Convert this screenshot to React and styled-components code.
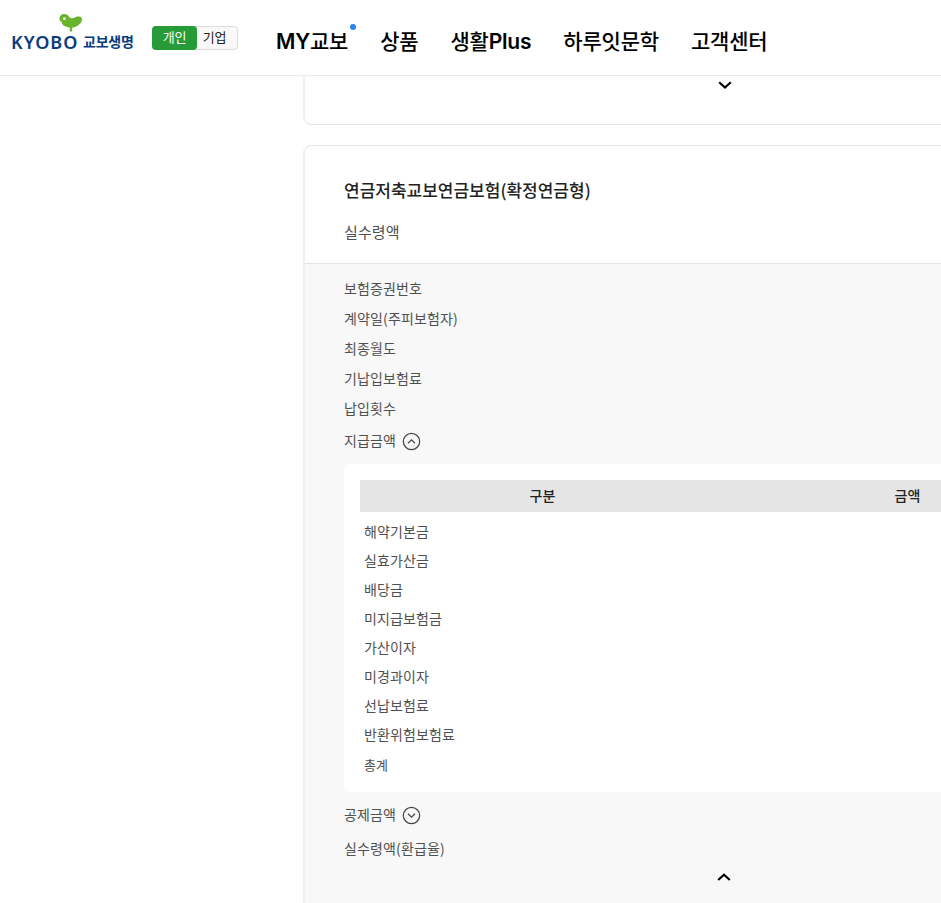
import React from "react";
import styled, { createGlobalStyle } from "styled-components";

const GlobalStyle = createGlobalStyle`
  * {
    box-sizing: border-box;
  }
  html, body {
    margin: 0;
    overflow: hidden;
    background: #fff;
  }
  body {
    font-family: "Noto Sans CJK KR", sans-serif;
    color: #505050;
  }
`;

const PageWrapper = styled.div`
  width: 100%;
  height: 100vh;
  display: flex;
  flex-direction: column;
  overflow: hidden;
`;

const Header = styled.header`
  flex: none;
  height: 76px;
  display: flex;
  align-items: flex-start;
  border-bottom: 1px solid #ebebeb;
  background: #fff;
`;

const Logo = styled.a`
  width: 124px;
  margin: 13px 0 0 11px;
  display: flex;
  flex-direction: column;
  color: #0b3c7f;
`;

const BirdIcon = styled.svg`
  display: block;
  width: 24px;
  height: 19px;
  margin-left: 48px;
`;

const LogoText = styled.span`
  display: flex;
  align-items: center;
  height: 20px;
  white-space: nowrap;
`;

const LogoLatin = styled.span`
  width: 72px;
  font: 600 18px/20px "Noto Sans", sans-serif;
  letter-spacing: 1px;
`;

const LogoKorean = styled.span`
  font-size: 14px;
  font-weight: 700;
  line-height: 20px;
  letter-spacing: -0.2px;
  margin-top: -2px;
`;

const Switch = styled.div`
  width: 86px;
  height: 24px;
  margin: 26px 0 0 17px;
  display: flex;
  border: 1px solid #dcdcdc;
  border-radius: 4px;
  background: #f8f8f8;
`;

const SwitchItem = styled.span`
  width: ${(props) => (props.$active ? 45 : 41)}px;
  height: 24px;
  margin: ${(props) => (props.$active ? "-1px 0 0 -1px" : "-1px 0 0 -3px")};
  border-radius: 4px;
  text-align: center;
  font-size: 13px;
  line-height: 21px;
  letter-spacing: -0.3px;
  color: ${(props) => (props.$active ? "#fff" : "#222")};
  background: ${(props) => (props.$active ? "#279b37" : "transparent")};
`;

const Nav = styled.nav`
  display: flex;
  gap: 32px;
  margin: 25px 0 0 38px;
`;

const NavItem = styled.a`
  position: relative;
  font-family: "Inter", "Noto Sans CJK KR", sans-serif;
  font-size: 21px;
  font-weight: 500;
  line-height: 34px;
  letter-spacing: -0.2px;
  white-space: nowrap;
  color: #000;
`;

const Latin = styled.span`
  font-weight: 600;
`;

const Dot = styled.i`
  position: absolute;
  top: -1px;
  right: -8px;
  width: 6px;
  height: 6px;
  border-radius: 50%;
  background: #2b83f6;
`;

const Content = styled.main`
  width: 842px;
  margin-left: 303px;
`;

const Card = styled.section`
  border: 1px solid #e5e5e5;
  border-left: 2px solid #f0f0f0;
  border-radius: 8px;
  background: #fff;
  overflow: hidden;
`;

const PreviousCard = styled(Card)`
  height: 49px;
  margin-bottom: 20px;
  border-top: none;
  border-top-left-radius: 0;
  border-top-right-radius: 0;
`;

const ToggleArrow = styled.svg`
  display: block;
  width: 14px;
  height: 10px;
  margin: ${(props) => props.$margin};
`;

const CardHead = styled.div`
  height: 118px;
  padding: 28px 39px 0;
  border-bottom: 1px solid #e5e5e5;
`;

const Title = styled.h3`
  margin: 0;
  font-size: 17px;
  font-weight: 500;
  line-height: 32px;
  color: #222;
`;

const AmountLabel = styled.p`
  margin: 14px 0 0;
  font-size: 15px;
  line-height: 24px;
  letter-spacing: 0.1px;
`;

const Detail = styled.div`
  height: 680px;
  padding: 9px 39px 0;
  background: #f8f8f8;
`;

const Row = styled.div`
  display: flex;
  align-items: center;
  height: ${(props) => props.$height || 30}px;
  font-size: 14px;
  letter-spacing: 0.14px;
`;

const CircleIcon = styled.svg`
  width: 19px;
  height: 19px;
  margin: 3px 0 0 6px;
`;

const TableBox = styled.div`
  width: 762px;
  height: 328px;
  margin-top: ${(props) => props.$gap || 0}px;
  padding: 16px;
  border-radius: 5px;
  background: #fff;
`;

const TableHead = styled.div`
  display: grid;
  grid-template-columns: 1fr 1fr;
  height: 32px;
  margin-bottom: 5px;
  text-align: center;
  font-size: 14px;
  font-weight: 500;
  line-height: 30px;
  color: #222;
  background: #e5e5e5;
`;

const TableRow = styled.div`
  padding-left: 4px;
  font-size: 14px;
  line-height: 29px;
  letter-spacing: 0.14px;
`;

const TotalRow = styled(TableRow)`
  font-size: 13px;
  line-height: 31px;
`;

const contractRows = [
  "보험증권번호",
  "계약일(주피보험자)",
  "최종월도",
  "기납입보험료",
  "납입횟수",
];

const paymentRows = [
  "해약기본금",
  "실효가산금",
  "배당금",
  "미지급보험금",
  "가산이자",
  "미경과이자",
  "선납보험료",
  "반환위험보험료",
];

function Arrow({ up, margin }) {
  return (
    <ToggleArrow $margin={margin} viewBox="0 0 14 10" fill="none" stroke="#000" strokeWidth="2.1">
      <path d={up ? "M1.2 8 7 2.7 12.8 8" : "M1.2 2.2 7 7.6l5.8-5.4"} />
    </ToggleArrow>
  );
}

function CircleArrow({ up }) {
  return (
    <CircleIcon viewBox="0 0 19 19" fill="none" stroke="#444" strokeWidth="1.2">
      <circle cx="9.5" cy="9.5" r="8.2" />
      <path d={up ? "M6 11.2 9.5 7.8l3.5 3.4" : "M6 7.8l3.5 3.4L13 7.8"} />
    </CircleIcon>
  );
}

function App() {
  return (
    <PageWrapper>
      <GlobalStyle />
      <Header>
        <Logo>
          <BirdIcon viewBox="0 0 24 19">
            <path
              fill="#6ab42d"
              d="M.5 5.8C.5 3 2.6 1 5.2 1 7.7 1 8.800 2.200 10.300 3.900 11.500 5.300 13.600 5.600 15.300 4.800 17 3.800 18.300 3.300 20 3.500 22 3.700 23.200 4.800 23 6.500 22.500 10.500 18.500 14.200 13.200 14.400V18.500H10.800V14.400C6 14 2.800 12 2.800 9 1.200 8.400.5 7.200.5 5.800Z"
            />
            <circle cx="5.4" cy="5.7" r="1.4" fill="#fff" />
          </BirdIcon>
          <LogoText>
            <LogoLatin>KYOBO</LogoLatin>
            <LogoKorean>교보생명</LogoKorean>
          </LogoText>
        </Logo>
        <Switch>
          <SwitchItem $active>개인</SwitchItem>
          <SwitchItem>기업</SwitchItem>
        </Switch>
        <Nav>
          <NavItem>
            <Latin>MY</Latin>교보
            <Dot />
          </NavItem>
          <NavItem>상품</NavItem>
          <NavItem>
            생활<Latin>Plus</Latin>
          </NavItem>
          <NavItem>하루잇문학</NavItem>
          <NavItem>고객센터</NavItem>
        </Nav>
      </Header>
      <Content>
        <PreviousCard>
          <Arrow margin="4px auto 0 413px" />
        </PreviousCard>
        <Card>
          <CardHead>
            <Title>연금저축교보연금보험(확정연금형)</Title>
            <AmountLabel>실수령액</AmountLabel>
          </CardHead>
          <Detail>
            {contractRows.map((label) => (
              <Row key={label}>{label}</Row>
            ))}
            <Row $height={34}>
              지급금액
              <CircleArrow up />
            </Row>
            <TableBox $gap={7}>
              <TableHead>
                <span>구분</span>
                <span>금액</span>
              </TableHead>
              {paymentRows.map((label) => (
                <TableRow key={label}>{label}</TableRow>
              ))}
              <TotalRow>총계</TotalRow>
            </TableBox>
            <Row $height={44}>
              공제금액
              <CircleArrow />
            </Row>
            <Row $height={23}>실수령액(환급율)</Row>
            <Arrow up margin="13px auto 0 373px" />
          </Detail>
        </Card>
      </Content>
    </PageWrapper>
  );
}

export default App;
